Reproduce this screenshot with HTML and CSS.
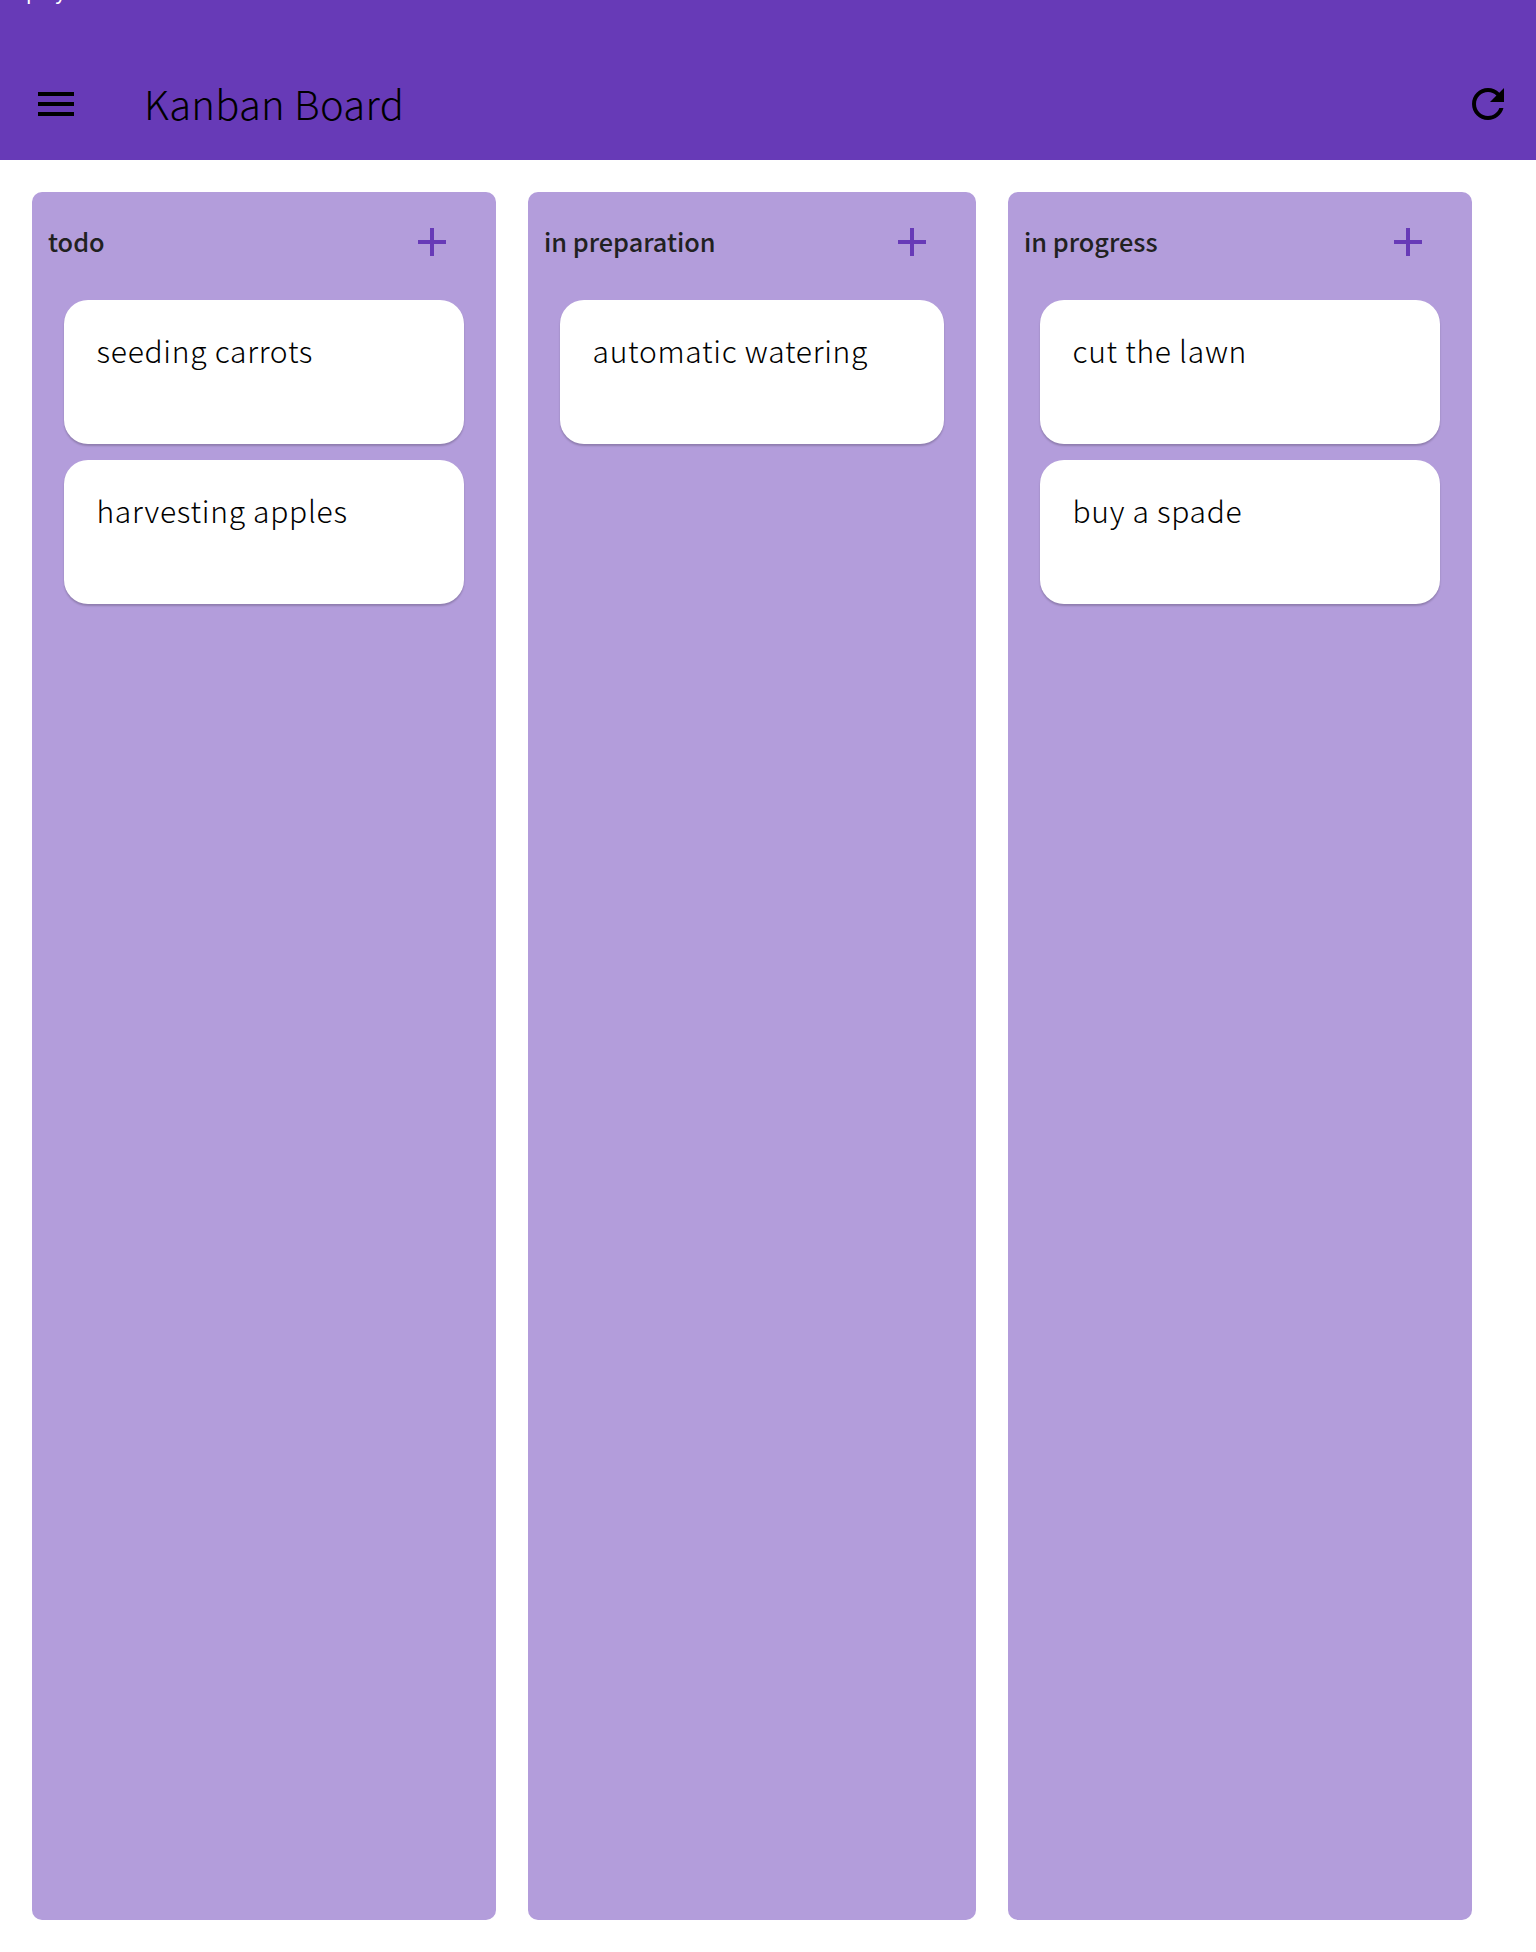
FILE: index.html
```html
<!DOCTYPE html>
<html>
<head>
  <title>Kanban Board</title>
  <link rel="stylesheet" href="styles.css">
</head>
<body>
  <header class="app-bar">
    <div class="status-text">play</div>
    <div class="toolbar">
      <svg class="bar-icon" viewBox="0 0 24 24"><path d="M3 18h18v-2H3v2zm0-5h18v-2H3v2zm0-7v2h18V6H3z"/></svg>
      <h1 class="app-title">Kanban Board</h1>
      <svg class="bar-icon refresh" viewBox="0 0 24 24"><path d="M17.65 6.35C16.2 4.9 14.21 4 12 4c-4.42 0-7.99 3.58-7.99 8s3.57 8 7.99 8c3.73 0 6.84-2.55 7.73-6h-2.08c-.82 2.33-3.04 4-5.65 4-3.31 0-6-2.69-6-6s2.69-6 6-6c1.66 0 3.14.69 4.22 1.78L13 11h7V4l-2.35 2.35z"/></svg>
    </div>
  </header>

  <main class="board">
    <section class="column">
      <div class="column-head">
        <span class="column-title">todo</span>
        <svg class="add-icon" viewBox="0 0 24 24"><path d="M19 13h-6v6h-2v-6H5v-2h6V5h2v6h6v2z"/></svg>
      </div>
      <div class="card">seeding carrots</div>
      <div class="card">harvesting apples</div>
    </section>

    <section class="column narrow">
      <div class="column-head">
        <span class="column-title">in preparation</span>
        <svg class="add-icon" viewBox="0 0 24 24"><path d="M19 13h-6v6h-2v-6H5v-2h6V5h2v6h6v2z"/></svg>
      </div>
      <div class="card">automatic watering</div>
    </section>

    <section class="column">
      <div class="column-head">
        <span class="column-title">in progress</span>
        <svg class="add-icon" viewBox="0 0 24 24"><path d="M19 13h-6v6h-2v-6H5v-2h6V5h2v6h6v2z"/></svg>
      </div>
      <div class="card">cut the lawn</div>
      <div class="card">buy a spade</div>
    </section>
  </main>
</body>
</html>
```

FILE: styles.css
```css
* {
  box-sizing: border-box;
}

body {
  margin: 0;
  height: 1952px;
  overflow: hidden;
  background-color: #fff;
  font-family: "Noto Sans CJK JP", "Noto Sans", sans-serif;
  color: #000;
}

.app-bar {
  position: relative;
  display: flex;
  align-items: flex-end;
  height: 160px;
  overflow: hidden;
  background-color: #673ab7;
}

.status-text {
  position: absolute;
  top: -23px;
  left: 26px;
  font-size: 20px;
  line-height: 28px;
  color: #fff;
}

.toolbar {
  display: flex;
  flex: 1;
  align-items: center;
  height: 96px;
  padding: 0 24px 16px 32px;
}

.bar-icon {
  flex: none;
  width: 48px;
  height: 48px;
}

.app-title {
  flex: 1;
  margin: 0 0 3px 64px;
  font-size: 40px;
  font-weight: 300;
  line-height: 48px;
  letter-spacing: 0.25px;
}

.board {
  display: flex;
  gap: 32px;
  height: 1760px;
  padding: 32px 0 0 32px;
}

.column {
  width: 464px;
  border-radius: 10px;
  background-color: #b39ddb;
}

.column.narrow {
  width: 448px;
}

.column-head {
  display: flex;
  align-items: center;
  justify-content: space-between;
  height: 100px;
  margin-bottom: 8px;
  padding: 0 40px 0 16px;
}

.column-title {
  margin-bottom: 2px;
  font-size: 25.3px;
  font-weight: 500;
  color: #212121;
}

.add-icon {
  width: 48px;
  height: 48px;
  fill: #673ab7;
}

.card {
  height: 144px;
  margin: 0 32px 16px;
  padding: 30px 32.5px;
  border-radius: 24px;
  background-color: #fff;
  box-shadow: 0 2px 2px rgba(0, 0, 0, 0.2);
  font-size: 30px;
  font-weight: 300;
  line-height: 40px;
  letter-spacing: 0.72px;
  color: #000;
}
```
